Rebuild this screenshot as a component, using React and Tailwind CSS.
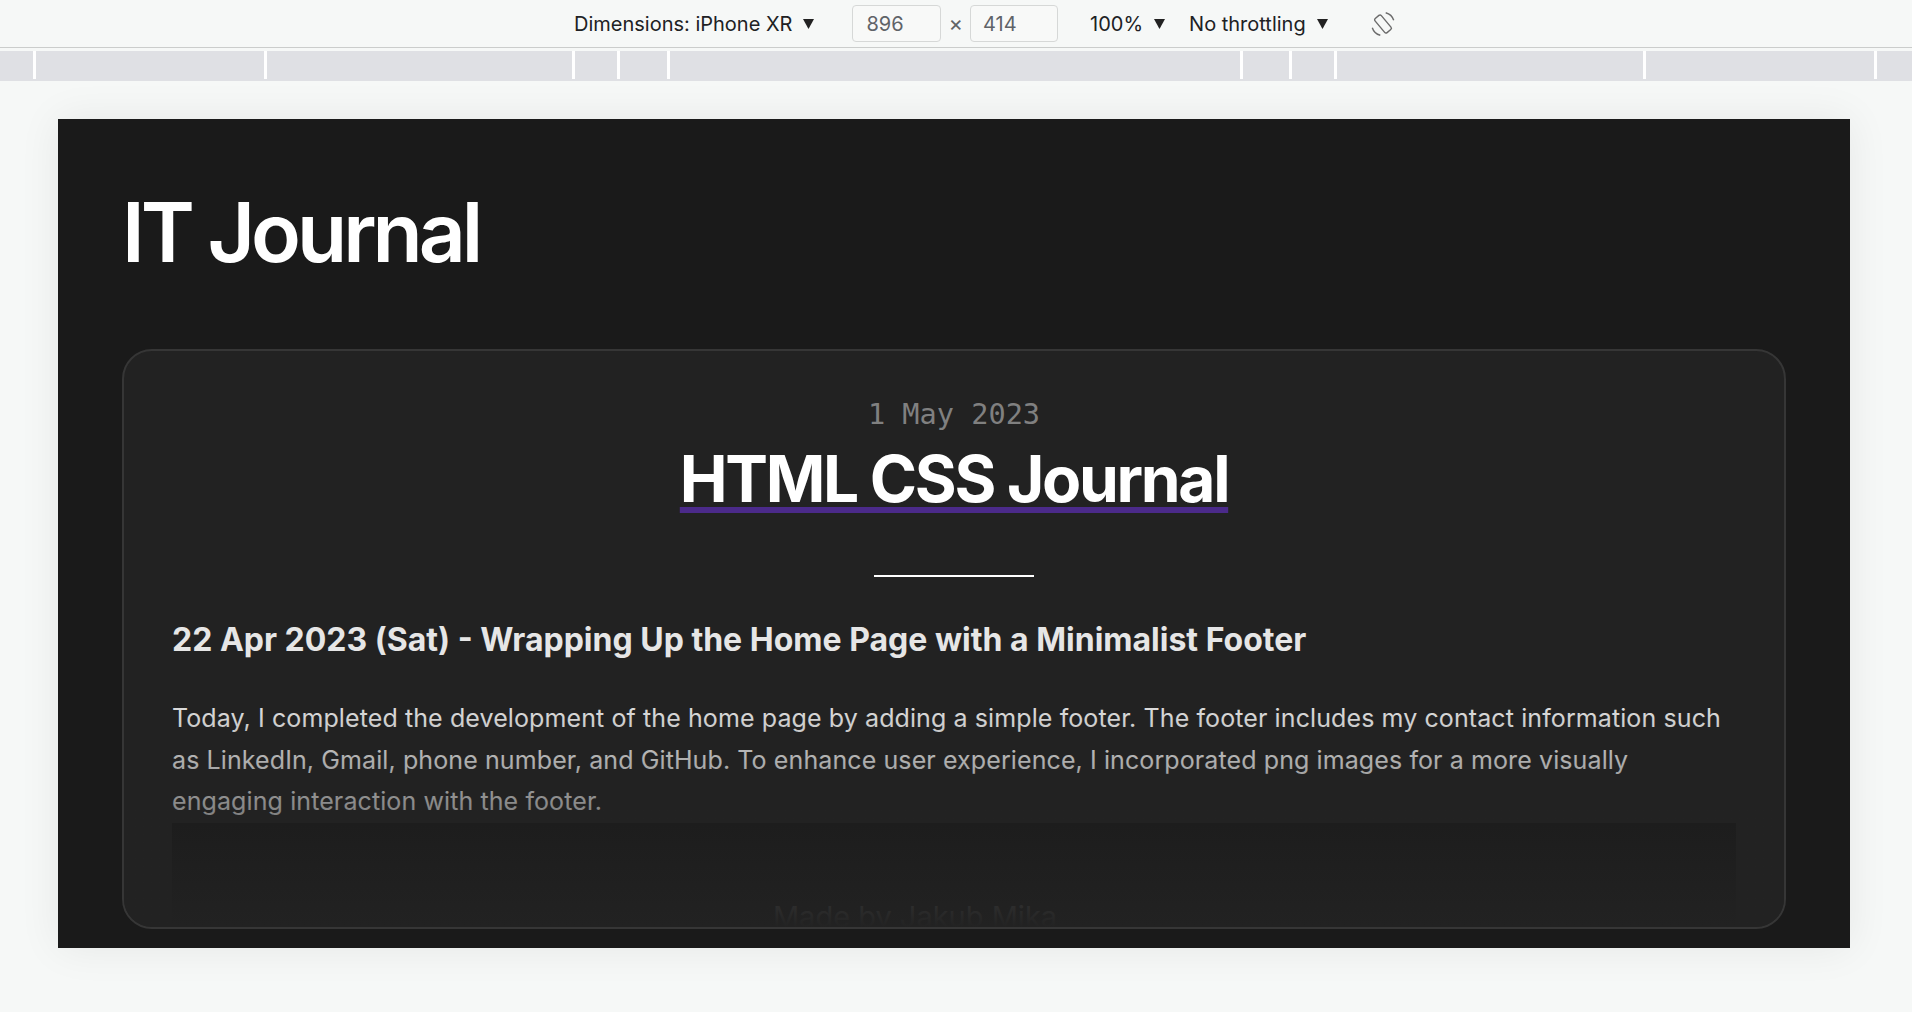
import React from "react";

const rulerParts = [
  "w-[33px]",
  "w-[228px]",
  "w-[305px]",
  "w-[42px]",
  "w-[47px]",
  "w-[570px]",
  "w-[46px]",
  "w-[42px]",
  "w-[306px]",
  "w-[228px]",
  "flex-1",
];

const Caret = () => (
  <svg width="11" height="10" viewBox="0 0 11 10" className="ml-[11px]">
    <polygon points="0,0 11,0 5.5,10" fill="#222" />
  </svg>
);

const RotateIcon = () => (
  <svg width="26" height="28" viewBox="0 0 24 24" fill="none" stroke="#6b6b6b" strokeWidth="1.3">
    <rect x="8.2" y="3.5" width="7.6" height="17" rx="1.6" transform="rotate(-40 12 12)" />
    <path d="M14.5 1.6 A10.6 10.6 0 0 1 21.9 8.6" />
    <path d="M9.5 22.4 A10.6 10.6 0 0 1 2.1 15.4" />
  </svg>
);

const DeviceToolbar = () => (
  <div className="h-[48px] border-b border-[#cbcdcc] bg-[#f6f8f7] flex items-center pl-[574px] text-[20px] text-[#202124] font-['Inter',sans-serif]">
    <div className="flex items-center">
      <span>Dimensions: iPhone XR</span>
      <Caret />
    </div>
    <div className="ml-[38px] w-[89px] h-[37px] border border-[#d6d8d7] rounded-[4px] bg-[#f8f9f8] flex items-center pl-[13px] text-[#5f6368]">
      896
    </div>
    <span className="mx-[7px] text-[#5f6368] text-[22px]">×</span>
    <div className="w-[88px] h-[37px] border border-[#d6d8d7] rounded-[4px] bg-[#f8f9f8] flex items-center pl-[12px] text-[#5f6368]">
      414
    </div>
    <div className="ml-[32px] flex items-center">
      <span>100%</span>
      <Caret />
    </div>
    <div className="ml-[24px] flex items-center">
      <span>No throttling</span>
      <Caret />
    </div>
    <div className="ml-[42px] flex items-center">
      <RotateIcon />
    </div>
  </div>
);

const Ruler = () => (
  <div className="mt-[3px] h-[30px] flex bg-[#dfe0e4]">
    {rulerParts.map((w, i) => (
      <React.Fragment key={i}>
        <div className={w} />
        {i < rulerParts.length - 1 && <div className="w-[3px] h-[28px] bg-white" />}
      </React.Fragment>
    ))}
  </div>
);

const JournalCard = () => (
  <div className="relative mt-[66px] h-[580px] rounded-[30px] border-2 border-[#363636] bg-[#222222] overflow-hidden px-12 pt-[46px]">
    <p className="text-center text-[28.6px] leading-[34px] text-[#808080] font-['DejaVu_Sans_Mono',monospace]">
      1 May 2023
    </p>
    <h2 className="mt-[10px] text-center text-[64px] leading-[76px] font-bold text-white tracking-[-2.3px]">
      <a href="#" className="underline decoration-[#4b2a8a] decoration-6 underline-offset-[5px]">
        HTML CSS Journal
      </a>
    </h2>
    <div className="mx-auto mt-[58px] w-[160px] h-[2px] bg-white" />
    <h3 className="mt-[43px] text-[32px] leading-[40px] font-bold text-[#e6e6e6]">
      22 Apr 2023 (Sat) - Wrapping Up the Home Page with a Minimalist Footer
    </h3>
    <p className="mt-[38px] text-[25px] leading-[41.5px] tracking-[0.1px] text-[#e0e0e0]">
      Today, I completed the development of the home page by adding a simple footer. The footer
      includes my contact information such as LinkedIn, Gmail, phone number, and GitHub. To enhance
      user experience, I incorporated png images for a more visually engaging interaction with the
      footer.
    </p>
    {/* footer preview, clipped by the card edge */}
    <div className="h-[160px] bg-[#171717] flex justify-center pr-[78px] pt-[76px]">
      <span className="text-[29px] leading-[35px] text-[#999999]">Made by Jakub Mika</span>
    </div>
    <div className="absolute inset-x-0 bottom-0 h-[225px] bg-linear-to-b from-[#222222]/0 to-[#222222]" />
  </div>
);

export default function App() {
  return (
    <div className="w-[1912px] h-[1012px] overflow-hidden bg-[#f6f8f7] font-['Inter',sans-serif]">
      <DeviceToolbar />
      <Ruler />
      <div className="ml-[58px] mt-[38px] w-[1792px] h-[829px] overflow-hidden bg-[#1a1a1a] px-16 pt-[64px] shadow-[0_0_40px_rgba(0,0,0,0.07)]">
        <h1 className="text-[82px] leading-[100px] font-semibold text-white tracking-[-4px]">IT Journal</h1>
        <JournalCard />
      </div>
    </div>
  );
}
